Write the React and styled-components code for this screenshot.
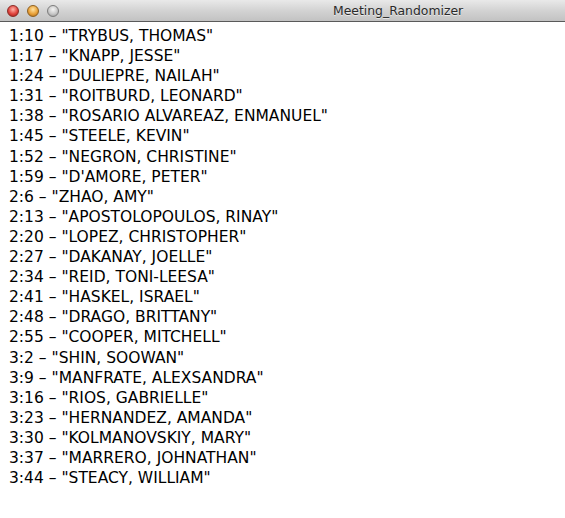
import React from "react";
import styled, { createGlobalStyle } from "styled-components";

const Global = createGlobalStyle`
  html, body { margin: 0; padding: 0; background: #fff; }
  body { width: 565px; height: 518px; overflow: hidden; }
`;

const Window = styled.div`
  width: 565px;
  height: 518px;
  display: flex;
  flex-direction: column;
  background: #fff;
`;

const TitleBar = styled.div`
  height: 22px;
  box-sizing: border-box;
  border-bottom: 1px solid #5a5a5a;
  background: linear-gradient(#e9e9e9, #d3d3d3 50%, #c2c2c2);
  display: flex;
  align-items: center;
  padding-left: 7px;
  position: relative;
`;

const Lights = styled.div`
  display: flex;
  gap: 8px;
`;

const Light = styled.span`
  width: 12px;
  height: 12px;
  border-radius: 50%;
  box-sizing: border-box;
  border: 1px solid ${(p) => p.$edge};
  background: radial-gradient(circle at 50% 35%, ${(p) => p.$hi} 0%, ${(p) => p.$c} 55%, ${(p) => p.$lo} 100%);
`;

const Title = styled.div`
  position: absolute;
  left: 333px;
  top: 0;
  height: 21px;
  line-height: 21px;
  font-family: "DejaVu Sans", sans-serif;
  font-size: 12.4px;
  color: #2a2a2a;
  text-shadow: 0 1px 0 rgba(255,255,255,0.6);
`;

const List = styled.div`
  padding: 4px 0 0 9px;
  display: flex;
  flex-direction: column;
`;

const Row = styled.div`
  font-family: "DejaVu Sans", sans-serif;
  font-size: 15.5px;
  line-height: 20.1px;
  color: #000;
  white-space: pre;
`;

const rows = [
  ["1:10", "TRYBUS, THOMAS"],
  ["1:17", "KNAPP, JESSE"],
  ["1:24", "DULIEPRE, NAILAH"],
  ["1:31", "ROITBURD, LEONARD"],
  ["1:38", "ROSARIO ALVAREAZ, ENMANUEL"],
  ["1:45", "STEELE, KEVIN"],
  ["1:52", "NEGRON, CHRISTINE"],
  ["1:59", "D'AMORE, PETER"],
  ["2:6", "ZHAO, AMY"],
  ["2:13", "APOSTOLOPOULOS, RINAY"],
  ["2:20", "LOPEZ, CHRISTOPHER"],
  ["2:27", "DAKANAY, JOELLE"],
  ["2:34", "REID, TONI-LEESA"],
  ["2:41", "HASKEL, ISRAEL"],
  ["2:48", "DRAGO, BRITTANY"],
  ["2:55", "COOPER, MITCHELL"],
  ["3:2", "SHIN, SOOWAN"],
  ["3:9", "MANFRATE, ALEXSANDRA"],
  ["3:16", "RIOS, GABRIELLE"],
  ["3:23", "HERNANDEZ, AMANDA"],
  ["3:30", "KOLMANOVSKIY, MARY"],
  ["3:37", "MARRERO, JOHNATHAN"],
  ["3:44", "STEACY, WILLIAM"],
];

export default function App() {
  return (
    <Window>
      <Global />
      <TitleBar>
        <Lights>
          <Light $c="#e0443e" $hi="#ffb3a8" $lo="#9c1a14" $edge="#8a2a24" />
          <Light $c="#e9a23a" $hi="#ffe2a0" $lo="#a8620e" $edge="#8e6020" />
          <Light $c="#c8c8c8" $hi="#f4f4f4" $lo="#8c8c8c" $edge="#7d7d7d" />
        </Lights>
        <Title>Meeting_Randomizer</Title>
      </TitleBar>
      <List>
        {rows.map(([t, n]) => (
          <Row key={t}>{`${t} – "${n}"`}</Row>
        ))}
      </List>
    </Window>
  );
}
